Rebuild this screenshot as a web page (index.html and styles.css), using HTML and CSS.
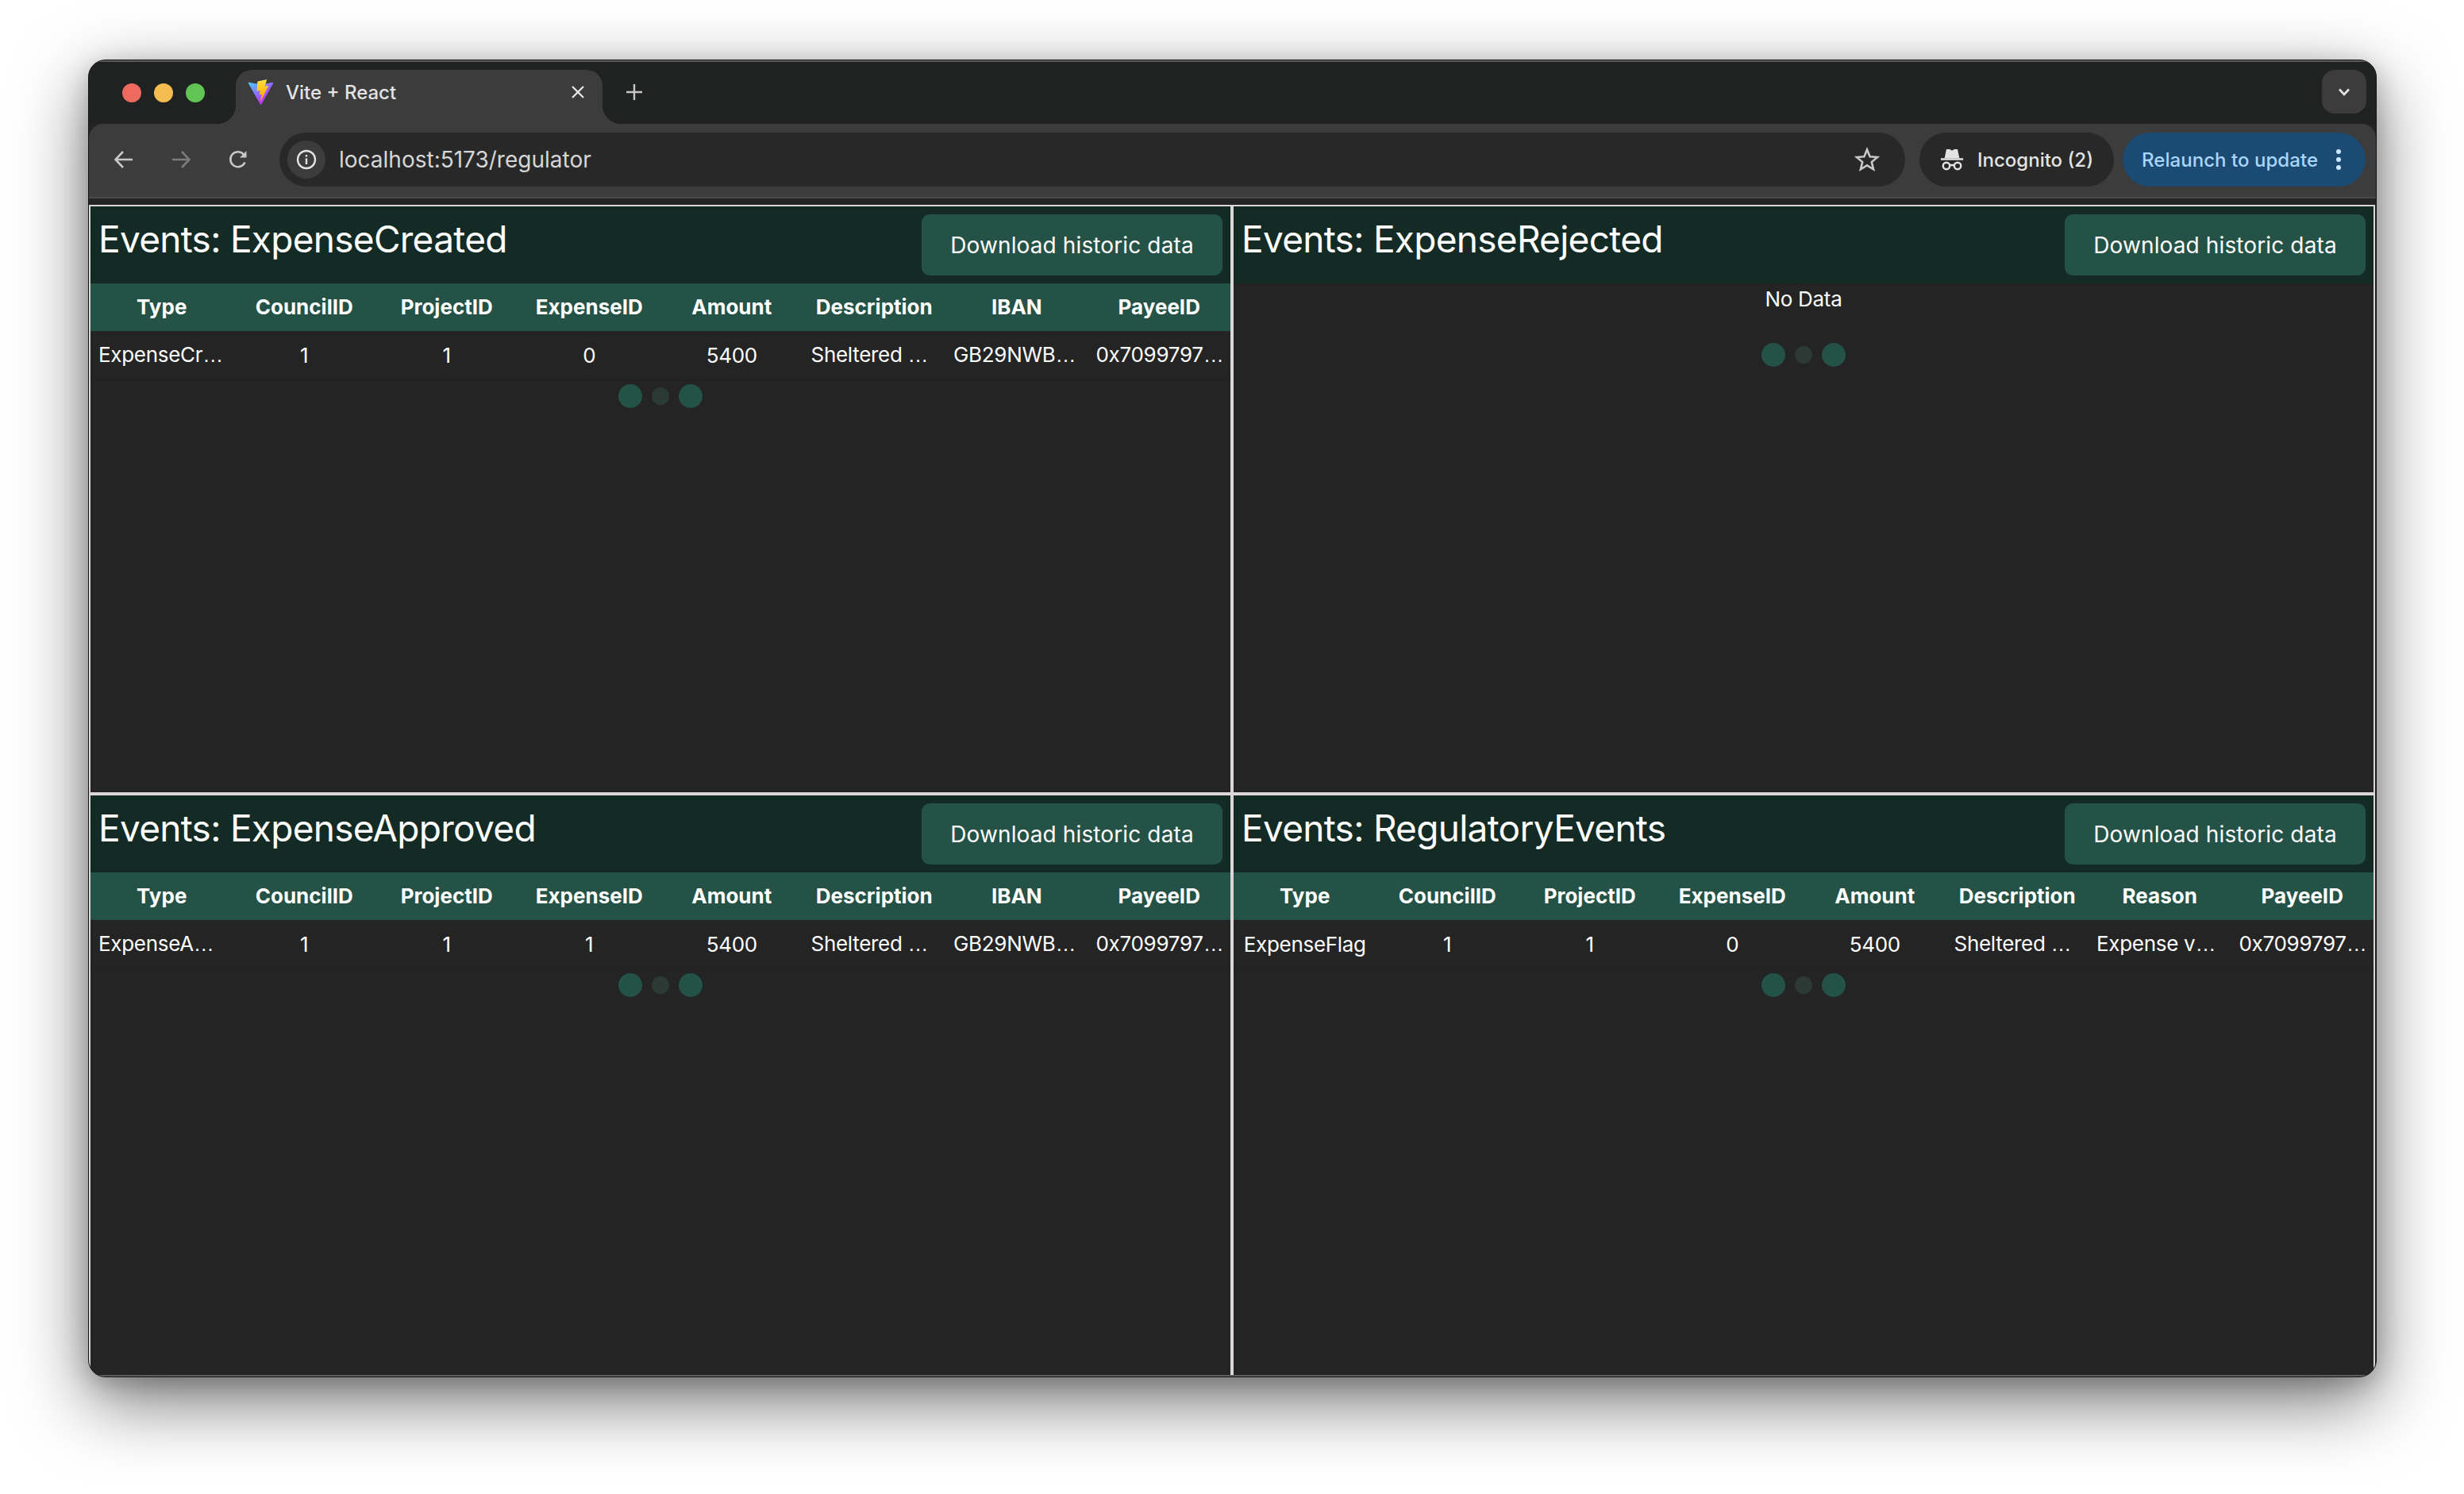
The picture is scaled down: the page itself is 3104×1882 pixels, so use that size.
FILE: index.html
```html
<!DOCTYPE html>
<html lang="en">
<head>
    <meta charset="UTF-8">
    <title>Vite + React</title>
    <link rel="stylesheet" href="styles.css">
</head>
<body>
    <div class="window">
        <div class="tabStrip">
            <div class="lights">
                <span class="light red"></span>
                <span class="light yellow"></span>
                <span class="light green"></span>
            </div>
            <div class="tab">
                <svg class="favicon" viewBox="0 0 410 404">
                    <defs>
                        <linearGradient id="viteA" gradientUnits="userSpaceOnUse" x1="6" y1="33" x2="235" y2="344">
                            <stop offset="0" stop-color="#41D1FF"/>
                            <stop offset="1" stop-color="#BD34FE"/>
                        </linearGradient>
                        <linearGradient id="viteB" gradientUnits="userSpaceOnUse" x1="194.65" y1="8.818" x2="236.076" y2="292.989">
                            <stop offset="0" stop-color="#FFEA83"/>
                            <stop offset="0.083" stop-color="#FFDD35"/>
                            <stop offset="1" stop-color="#FFA800"/>
                        </linearGradient>
                    </defs>
                    <path d="M399.641 59.5246L215.643 388.545C211.844 395.338 202.084 395.378 198.228 388.618L10.5817 59.5563C6.38087 52.1896 12.6802 43.2665 21.0281 44.7586L205.223 77.6824C206.398 77.8924 207.601 77.8904 208.776 77.6763L389.119 44.8058C397.439 43.2894 403.768 52.1434 399.641 59.5246Z" fill="url(#viteA)"/>
                    <path d="M292.965 1.5744L156.801 28.2552C154.563 28.6937 152.906 30.5903 152.771 32.8664L144.395 174.33C144.198 177.662 147.258 180.248 150.51 179.498L188.42 170.749C191.967 169.931 195.172 173.055 194.443 176.622L183.18 231.775C182.422 235.487 185.907 238.661 189.532 237.56L212.947 230.446C216.577 229.344 220.065 232.527 219.297 236.242L201.398 322.875C200.278 328.294 207.486 331.249 210.492 326.603L212.5 323.5L323.454 102.072C325.312 98.3645 322.108 94.137 318.036 94.9228L279.014 102.454C275.347 103.161 272.227 99.746 273.262 96.1583L298.731 7.86689C299.767 4.27314 296.636 0.855181 292.965 1.5744Z" fill="url(#viteB)"/>
                </svg>
                <span class="tabTitle">Vite + React</span>
                <svg class="tabClose" viewBox="0 0 16 16"><path d="M1 1L15 15M15 1L1 15"/></svg>
            </div>
            <svg class="newTab" viewBox="0 0 20 20"><path d="M10 0V20M0 10H20"/></svg>
            <div class="tabSearch">
                <svg viewBox="0 0 16 10"><path d="M2 1.5L8 8L14 1.5"/></svg>
            </div>
        </div>

        <div class="toolbar">
            <svg class="navIcon" viewBox="0 0 26 26"><path d="M24 13H3M12 3L2.5 13L12 23"/></svg>
            <svg class="navIcon disabled" viewBox="0 0 26 26"><path d="M2 13H23M14 3L23.5 13L14 23"/></svg>
            <svg class="navIcon" viewBox="0 0 26 26"><path d="M21.5 16.5A9.5 9.5 0 1 1 20 6.5L22.5 9"/><path class="solid" d="M23.5 2V10.5H15Z"/></svg>
            <div class="omnibox">
                <span class="siteInfo">
                    <svg viewBox="0 0 26 26"><circle cx="13" cy="13" r="11"/><path d="M13 11.5V19M13 7V9.5"/></svg>
                </span>
                <span class="url">localhost:5173/regulator</span>
                <svg class="star" viewBox="0 0 32 32"><path d="M16 3.5L19.6 12.3L29 13L21.8 19.1L24.1 28.3L16 23.3L7.9 28.3L10.2 19.1L3 13L12.4 12.3Z"/></svg>
            </div>
            <div class="incognito">
                <svg viewBox="0 0 32 32">
                    <path class="solid" d="M8.5 2H13L16 4L19 2H23.5L26 14H6Z"/>
                    <path d="M1 15.5H31"/>
                    <circle cx="8.5" cy="24.5" r="4.5"/>
                    <circle cx="23.5" cy="24.5" r="4.5"/>
                    <path d="M13 23.5H19"/>
                </svg>
                <span>Incognito (2)</span>
            </div>
            <div class="relaunch">
                <span>Relaunch to update</span>
                <span class="kebab"><i></i><i></i><i></i></span>
            </div>
        </div>

        <div class="content">
            <section class="panel">
                <div class="panelHead">
                    <h2>Events: ExpenseCreated</h2>
                    <button class="downloadBtn">Download historic data</button>
                </div>
                <table class="eventTable">
                    <thead>
                        <tr><th>Type</th><th>CouncilID</th><th>ProjectID</th><th>ExpenseID</th><th>Amount</th><th>Description</th><th>IBAN</th><th>PayeeID</th></tr>
                    </thead>
                    <tbody>
                        <tr><td class="cut">ExpenseCr<span class="more">…</span></td><td>1</td><td>1</td><td>0</td><td>5400</td><td class="cut">Sheltered <span class="more">…</span></td><td class="cut">GB29NWB<span class="more">…</span></td><td class="cut">0x7099797<span class="more">…</span></td></tr>
                    </tbody>
                </table>
                <div class="pager"><span class="dot"></span><span class="dot small"></span><span class="dot"></span></div>
            </section>

            <section class="panel">
                <div class="panelHead">
                    <h2>Events: ExpenseRejected</h2>
                    <button class="downloadBtn">Download historic data</button>
                </div>
                <div class="noData">No Data</div>
                <div class="pager"><span class="dot"></span><span class="dot small"></span><span class="dot"></span></div>
            </section>

            <section class="panel">
                <div class="panelHead">
                    <h2>Events: ExpenseApproved</h2>
                    <button class="downloadBtn">Download historic data</button>
                </div>
                <table class="eventTable">
                    <thead>
                        <tr><th>Type</th><th>CouncilID</th><th>ProjectID</th><th>ExpenseID</th><th>Amount</th><th>Description</th><th>IBAN</th><th>PayeeID</th></tr>
                    </thead>
                    <tbody>
                        <tr><td class="cut">ExpenseA<span class="more">…</span></td><td>1</td><td>1</td><td>1</td><td>5400</td><td class="cut">Sheltered <span class="more">…</span></td><td class="cut">GB29NWB<span class="more">…</span></td><td class="cut">0x7099797<span class="more">…</span></td></tr>
                    </tbody>
                </table>
                <div class="pager"><span class="dot"></span><span class="dot small"></span><span class="dot"></span></div>
            </section>

            <section class="panel">
                <div class="panelHead">
                    <h2>Events: RegulatoryEvents</h2>
                    <button class="downloadBtn">Download historic data</button>
                </div>
                <table class="eventTable">
                    <thead>
                        <tr><th>Type</th><th>CouncilID</th><th>ProjectID</th><th>ExpenseID</th><th>Amount</th><th>Description</th><th>Reason</th><th>PayeeID</th></tr>
                    </thead>
                    <tbody>
                        <tr><td>ExpenseFlag</td><td>1</td><td>1</td><td>0</td><td>5400</td><td class="cut">Sheltered <span class="more">…</span></td><td class="cut">Expense v<span class="more">…</span></td><td class="cut">0x7099797<span class="more">…</span></td></tr>
                    </tbody>
                </table>
                <div class="pager"><span class="dot"></span><span class="dot small"></span><span class="dot"></span></div>
            </section>
        </div>
    </div>
</body>
</html>
```

FILE: styles.css
```css
* {
    box-sizing: border-box;
}

html, body {
    margin: 0;
    height: 100%;
    background-color: #fff;
    overflow: hidden;
}

body {
    padding: 75px 110px 0 111px;
    font-family: Inter, "Liberation Sans", sans-serif;
    color: #fff;
}

.window {
    display: flex;
    flex-direction: column;
    width: 2883px;
    height: 1660px;
    border: 1px solid #141414;
    border-radius: 22px;
    background-color: #242424;
    overflow: hidden;
    box-shadow: 0 30px 90px rgba(0, 0, 0, 0.55), 0 8px 30px rgba(0, 0, 0, 0.2);
}

/* tab strip */
.tabStrip {
    display: flex;
    align-items: flex-end;
    height: 80px;
    border-top: 2px solid #5c5c5c;
    background-color: #202221;
}

.lights {
    display: flex;
    gap: 16px;
    align-self: flex-start;
    padding: 27px 0 0 42px;
    width: 185px;
}

.light {
    width: 24px;
    height: 24px;
    border-radius: 50%;
}

.red { background-color: #ee6a5f; }
.yellow { background-color: #f5bd4f; }
.green { background-color: #61c454; }

.tab {
    position: relative;
    display: flex;
    align-items: center;
    width: 462px;
    height: 68px;
    padding: 0 24px 12px 15px;
    border-radius: 20px 20px 0 0;
    background-color: #3c3c3c;
}

.tab::before, .tab::after {
    content: "";
    position: absolute;
    bottom: 0;
    width: 24px;
    height: 24px;
}

.tab::before {
    left: -24px;
    background: radial-gradient(circle at 0 0, transparent 24px, #3c3c3c 24.5px);
}

.tab::after {
    right: -24px;
    background: radial-gradient(circle at 100% 0, transparent 24px, #3c3c3c 24.5px);
}

.favicon {
    width: 33px;
    height: 33px;
    flex: none;
}

.tabTitle {
    margin-left: 15px;
    font-size: 24px;
    font-weight: 500;
    color: #e3e3e3;
}

.tabClose {
    width: 16px;
    height: 16px;
    margin-left: auto;
    margin-right: -1px;
    fill: none;
    stroke: #e3e3e3;
    stroke-width: 2.4;
}

.newTab {
    width: 20px;
    height: 20px;
    margin: 0 0 30px 30px;
    fill: none;
    stroke: #c7c7c7;
    stroke-width: 2.4;
}

.tabSearch {
    display: flex;
    align-items: center;
    justify-content: center;
    align-self: flex-start;
    width: 56px;
    height: 55px;
    margin: 10px 12px 0 auto;
    border-radius: 16px;
    background-color: #3c3c3c;
}

.tabSearch svg {
    width: 16px;
    height: 10px;
    fill: none;
    stroke: #e3e3e3;
    stroke-width: 2.6;
}

/* toolbar */
.toolbar {
    display: flex;
    align-items: center;
    height: 94px;
    padding: 0 12px 2px 31px;
    border-bottom: 2px solid #4a4a4a;
    border-radius: 18px 18px 0 0;
    background-color: #3c3c3c;
}

.navIcon {
    width: 26px;
    height: 26px;
    margin-right: 46px;
    flex: none;
    fill: none;
    stroke: #c7c7c7;
    stroke-width: 2.6;
}

.navIcon.disabled {
    stroke: #7b7b7b;
}

.navIcon .solid {
    fill: #c7c7c7;
    stroke: none;
}

.omnibox {
    display: flex;
    align-items: center;
    width: 2048px;
    height: 68px;
    margin-left: -7px;
    padding: 0 32px 0 10px;
    border-radius: 34px;
    background-color: #282828;
}

.siteInfo {
    display: flex;
    align-items: center;
    justify-content: center;
    width: 48px;
    height: 48px;
    border-radius: 50%;
    background-color: #3c3c3c;
}

.siteInfo svg {
    width: 26px;
    height: 26px;
    fill: none;
    stroke: #e3e3e3;
    stroke-width: 2.4;
}

.url {
    margin-left: 17px;
    font-size: 28px;
    color: #d6d6d6;
}

.star {
    width: 32px;
    height: 32px;
    margin-left: auto;
    fill: none;
    stroke: #c7c7c7;
    stroke-width: 2.6;
}

.incognito {
    display: flex;
    align-items: center;
    gap: 17px;
    width: 245px;
    height: 68px;
    margin-left: 18px;
    padding-left: 26px;
    border-radius: 34px;
    background-color: #282828;
    font-size: 24px;
    font-weight: 500;
    color: #e3e3e3;
}

.incognito svg {
    width: 30px;
    height: 30px;
    flex: none;
    fill: none;
    stroke: #e3e3e3;
    stroke-width: 2.6;
}

.incognito .solid {
    fill: #e3e3e3;
    stroke: none;
}

.relaunch {
    display: flex;
    align-items: center;
    width: 306px;
    height: 68px;
    margin-left: 11px;
    padding-left: 24px;
    border-radius: 34px;
    background-color: #1b4a72;
    font-size: 24px;
    font-weight: 500;
    letter-spacing: 0.05px;
    color: #a9d6fb;
}

.kebab {
    display: flex;
    flex-direction: column;
    gap: 4px;
    margin-left: 23px;
}

.kebab i {
    width: 6px;
    height: 6px;
    border-radius: 50%;
    background-color: #cfe6fb;
}

/* event panels */
.content {
    display: grid;
    flex: 1;
    grid-template-columns: 1440px 1440px;
    grid-template-rows: 742px 1fr;
    min-height: 0;
    margin-top: 8px;
    border-bottom: 2px solid #5c5c5c;
}

.panel {
    min-height: 0;
    border: 2px solid #ddd6d6;
    overflow: hidden;
}

/* bottom row runs into the window edge */
.panel:nth-child(n+3) {
    border-bottom: none;
}

.panelHead {
    display: flex;
    justify-content: space-between;
    align-items: flex-start;
    height: 97px;
    padding: 10px 10px 0 10px;
    background-color: #132a25;
}

.panelHead h2 {
    margin: 0;
    font-size: 46px;
    font-weight: 400;
    letter-spacing: -0.72px;
    line-height: 62px;
}

.downloadBtn {
    width: 379px;
    height: 77px;
    border: none;
    border-radius: 10px;
    background-color: #245246;
    color: #fff;
    font-family: inherit;
    font-size: 28px;
    letter-spacing: 0.12px;
}

.eventTable {
    width: 100%;
    border-collapse: collapse;
    table-layout: fixed;
}

.eventTable th {
    height: 60px;
    padding: 0 10px 1px;
    background-color: #245246;
    font-size: 26px;
    font-weight: 700;
    text-align: center;
}

.eventTable td {
    height: 61px;
    padding: 0 6px;
    border-bottom: 1px solid #202020;
    font-size: 26px;
    letter-spacing: -0.3px;
    text-align: center;
    white-space: nowrap;
}

/* cut-off values start at the cell padding */
.eventTable td.cut {
    padding-left: 10px;
    text-align: left;
}

/* and end in a wider ellipsis */
.more {
    font-family: "Liberation Sans", sans-serif;
}

.noData {
    height: 70px;
    font-size: 26px;
    letter-spacing: -0.3px;
    line-height: 40px;
    text-align: center;
}

.pager {
    display: flex;
    justify-content: center;
    align-items: center;
    gap: 12px;
    height: 40px;
}

.dot {
    width: 30px;
    height: 30px;
    border-radius: 50%;
    background-color: #245246;
}

.dot.small {
    width: 22px;
    height: 22px;
    background-color: #2c3a35;
}
```
